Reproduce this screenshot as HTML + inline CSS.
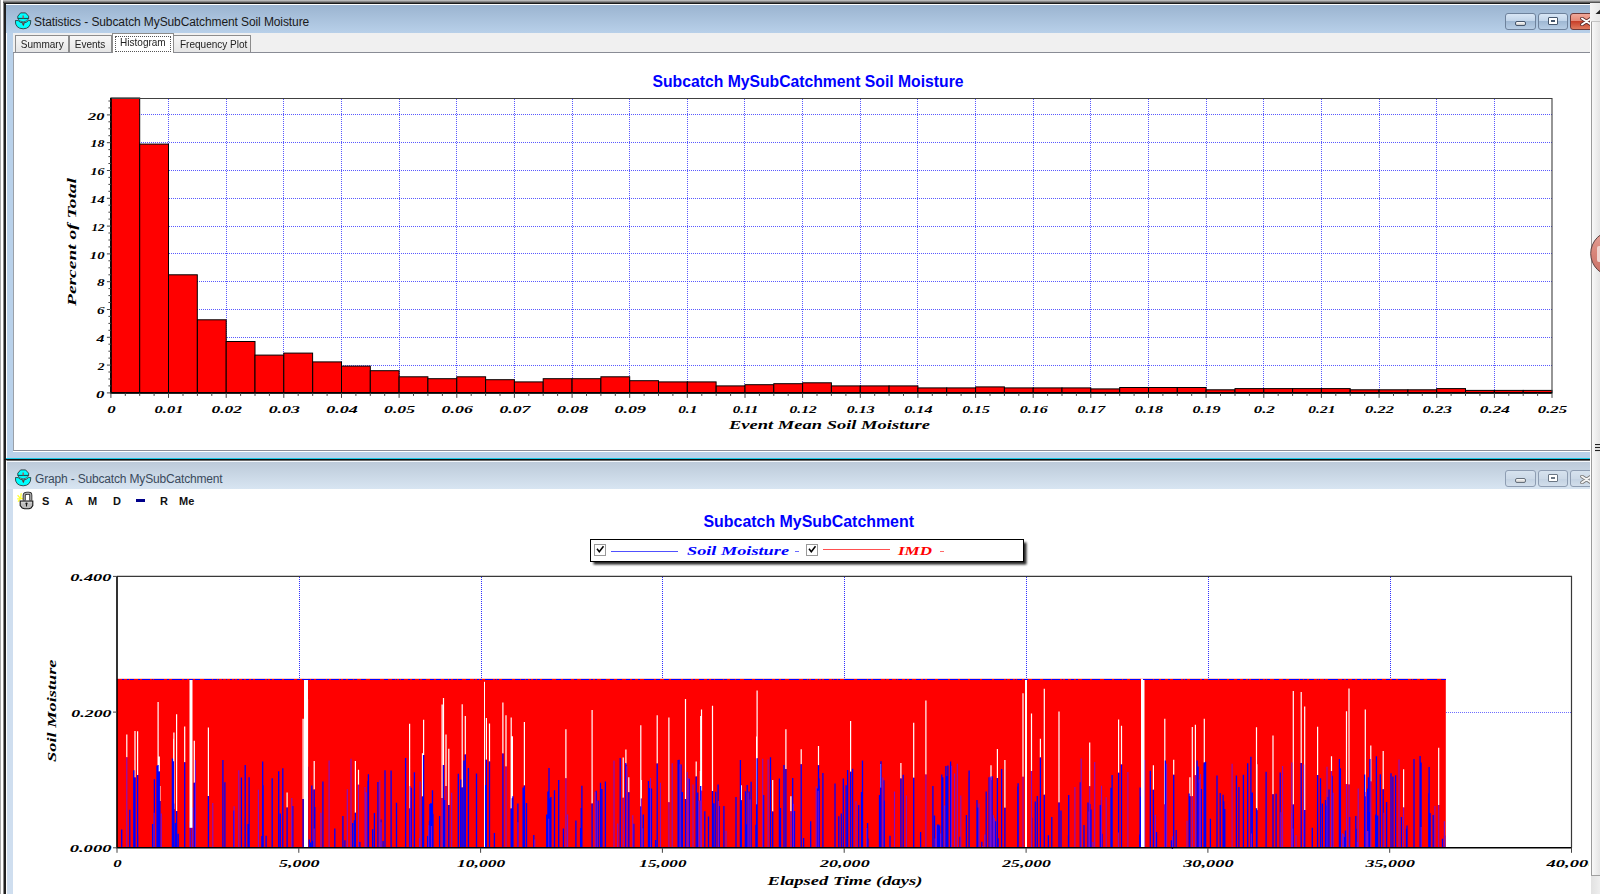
<!DOCTYPE html>
<html><head><meta charset="utf-8">
<style>
*{margin:0;padding:0;box-sizing:border-box}
html,body{width:1600px;height:894px;overflow:hidden;background:#fff;position:relative;font-family:"Liberation Sans",sans-serif}
.a{position:absolute}
.tb1{left:6px;top:5px;width:1584px;height:28px;background:linear-gradient(#9bb4d0,#b8d0e9)}
.tb2{left:7px;top:462px;width:1583px;height:27px;background:linear-gradient(#bccad9,#d8e5f2)}
.btn{height:17px;border:1px solid #6e829c;border-radius:3px;background:linear-gradient(#d8e6f5 0%,#c2d5ea 45%,#9fb8d3 50%,#b7cde5 100%)}
.btn2{height:17px;border:1px solid #8e9db2;border-radius:3px;background:linear-gradient(#d6e2ee 0%,#ccd9e7 50%,#c3d2e2 52%,#d2deeb 100%)}
.cls{height:17px;border:1px solid #6d3a3a;border-radius:3px;background:linear-gradient(#f0a89a 0%,#e58a78 45%,#c7402a 50%,#e07a5e 100%)}
.ttl{font-size:12px;color:#1a1a1a;white-space:nowrap}
.tab{top:35px;height:18px;border:1px solid #8c8c8c;border-bottom:none;background:linear-gradient(#f7f7f7,#e4e4e4);font-size:11.8px;color:#222;text-align:center;line-height:16px;white-space:nowrap}
.tab span{display:inline-block;transform:scaleX(0.85);transform-origin:50% 50%}
.tbar{font-family:"Liberation Sans",sans-serif;font-weight:bold;font-size:11px;color:#111;top:495px}
</style></head><body>
<!-- outer desktop edges -->
<div class="a" style="left:0;top:0;width:1600px;height:3px;background:linear-gradient(#d0d0d0,#9a9a9a 40%,#3a3a3a)"></div>
<div class="a" style="left:0;top:0;width:1px;height:894px;background:#a8a8a8"></div>
<div class="a" style="left:1px;top:0;width:2px;height:894px;background:#fff"></div>
<div class="a" style="left:3px;top:3px;width:1px;height:891px;background:#8a8a8a"></div>
<div class="a" style="left:4px;top:3px;width:2px;height:891px;background:#202020"></div>

<!-- TOP WINDOW -->
<div class="a" style="left:4px;top:3px;width:1586px;height:1px;background:#1a1a1a"></div>
<div class="a" style="left:6px;top:4px;width:1584px;height:455px;background:#b9d1ea;border-left:1px solid #fff;border-top:1px solid #fff"></div>
<div class="a tb1"></div>
<!-- icon -->
<svg class="a" style="left:15px;top:12px" width="18" height="18" viewBox="0 0 18 18">
 <path d="M0.3 8.6 L3.2 8.6 Q4.8 10.8 8.2 10.9 Q11.8 10.8 13.4 8.6 L15.8 8.6 Q15.9 16.6 8.2 16.8 Q0.2 16.6 0.3 8.6 Z" fill="#00ffff" stroke="#1a2a2a" stroke-width="0.8"/>
 <path d="M2.8 6.6 H13.6 Q12.6 9.7 8.2 9.8 Q3.8 9.7 2.8 6.6 Z" fill="#00ffff" stroke="#1a2a2a" stroke-width="0.6"/>
 <path d="M5.6 0.9 L10.6 0.9 L13.6 4.2 L13.6 6.4 L2.8 6.4 L2.8 4.2 Z" fill="#00ffff" stroke="#1a2a2a" stroke-width="0.8"/>
 <path d="M7.4 3.6 h1.6 v2.6 h-1.6z" fill="#9a6a6a"/>
 <path d="M6.8 11.2 L9.8 11.2 L8.3 14.2 Z" fill="#6a3030"/>
</svg>
<div class="a ttl" style="left:34px;top:14.5px;letter-spacing:-0.1px">Statistics - Subcatch MySubCatchment Soil Moisture</div>
<div class="a btn" style="left:1505px;top:13px;width:31px"><div class="a" style="left:9px;top:7px;width:11px;height:5px;border:1px solid #45566c;background:linear-gradient(#fff,#c8c8c8);border-radius:2px"></div></div>
<div class="a btn" style="left:1538px;top:13px;width:30px"><div class="a" style="left:9px;top:3px;width:10px;height:8px;border:1.5px solid #45566c;background:#fff;border-radius:1px"><div class="a" style="left:2px;top:2px;width:4px;height:2px;background:#45566c"></div></div></div>
<div class="a cls" style="left:1570px;top:13px;width:30px"><svg class="a" style="left:9px;top:3px" width="14" height="9"><path d="M2 1.5 L11 7.5 M11 1.5 L2 7.5" stroke="#5a2a2a" stroke-width="3.6" stroke-linecap="round"/><path d="M2 1.5 L11 7.5 M11 1.5 L2 7.5" stroke="#fff" stroke-width="2" stroke-linecap="round"/></svg></div>
<!-- tab area -->
<div class="a" style="left:13px;top:33px;width:1577px;height:20px;background:#f0f0f0"></div>
<div class="a tab" style="left:15px;width:54px"><span>Summary</span></div>
<div class="a tab" style="left:69px;width:43px"><span>Events</span></div>
<div class="a tab" style="left:173px;width:78px"><span>Frequency Plot</span></div>
<div class="a" style="left:13px;top:52px;width:1577px;height:1px;background:#898c95"></div>
<div class="a tab" style="left:112px;top:33px;width:62px;height:21px;background:#fff;line-height:16px;border-color:#8c8c8c"><div class="a" style="left:2px;top:2px;width:56px;height:16px;border:1px dotted #555"></div><span>Histogram</span></div>
<!-- client -->
<div class="a" style="left:13px;top:53px;width:1577px;height:398px;background:#fff;border-left:1px solid #9aa0a8;border-bottom:1px solid #8a8e98"></div>
<div class="a" style="left:13px;top:451px;width:1577px;height:1px;background:#fff"></div>
<div class="a" style="left:6px;top:458px;width:1584px;height:1px;background:#19c8e6"></div>
<div class="a" style="left:4px;top:459px;width:1586px;height:1px;background:#101010"></div>

<svg style="position:absolute;left:0;top:0" width="1600" height="460"><path d="M168.5 99V392.9M226.5 99V392.9M283.5 99V392.9M341.5 99V392.9M399.5 99V392.9M456.5 99V392.9M514.5 99V392.9M572.5 99V392.9M629.5 99V392.9M687.5 99V392.9M744.5 99V392.9M802.5 99V392.9M860.5 99V392.9M917.5 99V392.9M975.5 99V392.9M1033.5 99V392.9M1090.5 99V392.9M1148.5 99V392.9M1206.5 99V392.9M1263.5 99V392.9M1321.5 99V392.9M1379.5 99V392.9M1436.5 99V392.9M1494.5 99V392.9" stroke="#3030ff" stroke-width="1" stroke-dasharray="1 1" fill="none" opacity="0.8"/><path d="M111 365.5H1552.0M111 337.5H1552.0M111 309.5H1552.0M111 281.5H1552.0M111 253.5H1552.0M111 226.5H1552.0M111 198.5H1552.0M111 170.5H1552.0M111 142.5H1552.0M111 114.5H1552.0" stroke="#3030ff" stroke-width="1" stroke-dasharray="1 1" fill="none" opacity="0.8"/><g fill="#ff0000" stroke="#000" stroke-width="1"><rect x="110.9" y="98.0" width="28.8" height="294.9"/><rect x="139.7" y="144.1" width="28.8" height="248.8"/><rect x="168.5" y="274.8" width="28.8" height="118.1"/><rect x="197.4" y="319.8" width="28.8" height="73.1"/><rect x="226.2" y="341.5" width="28.8" height="51.4"/><rect x="255.0" y="355.1" width="28.8" height="37.8"/><rect x="283.8" y="353.1" width="28.8" height="39.8"/><rect x="312.7" y="361.9" width="28.8" height="31.0"/><rect x="341.5" y="366.1" width="28.8" height="26.8"/><rect x="370.3" y="370.7" width="28.8" height="22.2"/><rect x="399.1" y="376.8" width="28.8" height="16.1"/><rect x="427.9" y="378.7" width="28.8" height="14.2"/><rect x="456.8" y="376.8" width="28.8" height="16.1"/><rect x="485.6" y="379.7" width="28.8" height="13.2"/><rect x="514.4" y="381.9" width="28.8" height="11.0"/><rect x="543.2" y="378.7" width="28.8" height="14.2"/><rect x="572.1" y="378.7" width="28.8" height="14.2"/><rect x="600.9" y="376.8" width="28.8" height="16.1"/><rect x="629.7" y="380.7" width="28.8" height="12.2"/><rect x="658.5" y="381.9" width="28.8" height="11.0"/><rect x="687.3" y="381.9" width="28.8" height="11.0"/><rect x="716.2" y="385.9" width="28.8" height="6.9"/><rect x="745.0" y="384.7" width="28.8" height="8.2"/><rect x="773.8" y="383.7" width="28.8" height="9.2"/><rect x="802.6" y="382.8" width="28.8" height="10.1"/><rect x="831.4" y="385.9" width="28.8" height="6.9"/><rect x="860.3" y="385.9" width="28.8" height="6.9"/><rect x="889.1" y="385.9" width="28.8" height="6.9"/><rect x="917.9" y="387.9" width="28.8" height="5.0"/><rect x="946.7" y="387.9" width="28.8" height="5.0"/><rect x="975.6" y="386.9" width="28.8" height="6.0"/><rect x="1004.4" y="387.9" width="28.8" height="5.0"/><rect x="1033.2" y="387.9" width="28.8" height="5.0"/><rect x="1062.0" y="387.9" width="28.8" height="5.0"/><rect x="1090.8" y="388.9" width="28.8" height="4.0"/><rect x="1119.7" y="387.5" width="28.8" height="5.4"/><rect x="1148.5" y="387.5" width="28.8" height="5.4"/><rect x="1177.3" y="387.5" width="28.8" height="5.4"/><rect x="1206.1" y="389.8" width="28.8" height="3.1"/><rect x="1235.0" y="388.6" width="28.8" height="4.3"/><rect x="1263.8" y="388.6" width="28.8" height="4.3"/><rect x="1292.6" y="388.6" width="28.8" height="4.3"/><rect x="1321.4" y="388.6" width="28.8" height="4.3"/><rect x="1350.2" y="389.8" width="28.8" height="3.1"/><rect x="1379.1" y="389.8" width="28.8" height="3.1"/><rect x="1407.9" y="389.8" width="28.8" height="3.1"/><rect x="1436.7" y="388.6" width="28.8" height="4.3"/><rect x="1465.5" y="390.4" width="28.8" height="2.5"/><rect x="1494.4" y="390.4" width="28.8" height="2.5"/><rect x="1523.2" y="390.4" width="28.8" height="2.5"/></g><path d="M110.9 98.5H1552.0V392.9" stroke="#404040" stroke-width="1.1" fill="none"/><path d="M110.9 98.0V392.9H1552.0" stroke="#000" stroke-width="1.6" fill="none"/><path d="M110.9 392.9v5M125.3 392.9v3M139.7 392.9v3M154.1 392.9v3M168.5 392.9v5M183.0 392.9v3M197.4 392.9v3M211.8 392.9v3M226.2 392.9v5M240.6 392.9v3M255.0 392.9v3M269.4 392.9v3M283.8 392.9v5M298.2 392.9v3M312.7 392.9v3M327.1 392.9v3M341.5 392.9v5M355.9 392.9v3M370.3 392.9v3M384.7 392.9v3M399.1 392.9v5M413.5 392.9v3M427.9 392.9v3M442.4 392.9v3M456.8 392.9v5M471.2 392.9v3M485.6 392.9v3M500.0 392.9v3M514.4 392.9v5M528.8 392.9v3M543.2 392.9v3M557.6 392.9v3M572.1 392.9v5M586.5 392.9v3M600.9 392.9v3M615.3 392.9v3M629.7 392.9v5M644.1 392.9v3M658.5 392.9v3M672.9 392.9v3M687.3 392.9v5M701.8 392.9v3M716.2 392.9v3M730.6 392.9v3M745.0 392.9v5M759.4 392.9v3M773.8 392.9v3M788.2 392.9v3M802.6 392.9v5M817.0 392.9v3M831.4 392.9v3M845.9 392.9v3M860.3 392.9v5M874.7 392.9v3M889.1 392.9v3M903.5 392.9v3M917.9 392.9v5M932.3 392.9v3M946.7 392.9v3M961.1 392.9v3M975.6 392.9v5M990.0 392.9v3M1004.4 392.9v3M1018.8 392.9v3M1033.2 392.9v5M1047.6 392.9v3M1062.0 392.9v3M1076.4 392.9v3M1090.8 392.9v5M1105.3 392.9v3M1119.7 392.9v3M1134.1 392.9v3M1148.5 392.9v5M1162.9 392.9v3M1177.3 392.9v3M1191.7 392.9v3M1206.1 392.9v5M1220.5 392.9v3M1235.0 392.9v3M1249.4 392.9v3M1263.8 392.9v5M1278.2 392.9v3M1292.6 392.9v3M1307.0 392.9v3M1321.4 392.9v5M1335.8 392.9v3M1350.2 392.9v3M1364.7 392.9v3M1379.1 392.9v5M1393.5 392.9v3M1407.9 392.9v3M1422.3 392.9v3M1436.7 392.9v5M1451.1 392.9v3M1465.5 392.9v3M1479.9 392.9v3M1494.4 392.9v5M1508.8 392.9v3M1523.2 392.9v3M1537.6 392.9v3M1552.0 392.9v5M110.9 392.9h-4M110.9 385.9h-2.5M110.9 379.0h-2.5M110.9 372.0h-2.5M110.9 365.1h-4M110.9 358.1h-2.5M110.9 351.2h-2.5M110.9 344.2h-2.5M110.9 337.3h-4M110.9 330.3h-2.5M110.9 323.4h-2.5M110.9 316.4h-2.5M110.9 309.5h-4M110.9 302.5h-2.5M110.9 295.6h-2.5M110.9 288.6h-2.5M110.9 281.7h-4M110.9 274.8h-2.5M110.9 267.8h-2.5M110.9 260.8h-2.5M110.9 253.9h-4M110.9 246.9h-2.5M110.9 240.0h-2.5M110.9 233.0h-2.5M110.9 226.1h-4M110.9 219.1h-2.5M110.9 212.2h-2.5M110.9 205.2h-2.5M110.9 198.3h-4M110.9 191.3h-2.5M110.9 184.4h-2.5M110.9 177.4h-2.5M110.9 170.5h-4M110.9 163.5h-2.5M110.9 156.6h-2.5M110.9 149.6h-2.5M110.9 142.7h-4M110.9 135.7h-2.5M110.9 128.8h-2.5M110.9 121.8h-2.5M110.9 114.9h-4M110.9 107.9h-2.5M110.9 101.0h-2.5" stroke="#444" stroke-width="1" fill="none"/><g font-family="Liberation Serif" font-weight="bold" font-style="italic" font-size="11" fill="#000"><text x="111.4" y="412.6" text-anchor="middle" textLength="8.4" lengthAdjust="spacingAndGlyphs">0</text><text x="169.0" y="412.6" text-anchor="middle" textLength="28.9" lengthAdjust="spacingAndGlyphs">0.01</text><text x="226.7" y="412.6" text-anchor="middle" textLength="30.6" lengthAdjust="spacingAndGlyphs">0.02</text><text x="284.3" y="412.6" text-anchor="middle" textLength="31.2" lengthAdjust="spacingAndGlyphs">0.03</text><text x="342.0" y="412.6" text-anchor="middle" textLength="31.7" lengthAdjust="spacingAndGlyphs">0.04</text><text x="399.6" y="412.6" text-anchor="middle" textLength="31.2" lengthAdjust="spacingAndGlyphs">0.05</text><text x="457.3" y="412.6" text-anchor="middle" textLength="31.4" lengthAdjust="spacingAndGlyphs">0.06</text><text x="514.9" y="412.6" text-anchor="middle" textLength="31.0" lengthAdjust="spacingAndGlyphs">0.07</text><text x="572.6" y="412.6" text-anchor="middle" textLength="31.4" lengthAdjust="spacingAndGlyphs">0.08</text><text x="630.2" y="412.6" text-anchor="middle" textLength="31.4" lengthAdjust="spacingAndGlyphs">0.09</text><text x="687.8" y="412.6" text-anchor="middle" textLength="19.3" lengthAdjust="spacingAndGlyphs">0.1</text><text x="745.5" y="412.6" text-anchor="middle" textLength="25.6" lengthAdjust="spacingAndGlyphs">0.11</text><text x="803.1" y="412.6" text-anchor="middle" textLength="27.3" lengthAdjust="spacingAndGlyphs">0.12</text><text x="860.8" y="412.6" text-anchor="middle" textLength="27.9" lengthAdjust="spacingAndGlyphs">0.13</text><text x="918.4" y="412.6" text-anchor="middle" textLength="28.4" lengthAdjust="spacingAndGlyphs">0.14</text><text x="976.1" y="412.6" text-anchor="middle" textLength="27.9" lengthAdjust="spacingAndGlyphs">0.15</text><text x="1033.7" y="412.6" text-anchor="middle" textLength="28.1" lengthAdjust="spacingAndGlyphs">0.16</text><text x="1091.3" y="412.6" text-anchor="middle" textLength="27.7" lengthAdjust="spacingAndGlyphs">0.17</text><text x="1149.0" y="412.6" text-anchor="middle" textLength="28.1" lengthAdjust="spacingAndGlyphs">0.18</text><text x="1206.6" y="412.6" text-anchor="middle" textLength="28.1" lengthAdjust="spacingAndGlyphs">0.19</text><text x="1264.3" y="412.6" text-anchor="middle" textLength="21.0" lengthAdjust="spacingAndGlyphs">0.2</text><text x="1321.9" y="412.6" text-anchor="middle" textLength="27.3" lengthAdjust="spacingAndGlyphs">0.21</text><text x="1379.6" y="412.6" text-anchor="middle" textLength="29.0" lengthAdjust="spacingAndGlyphs">0.22</text><text x="1437.2" y="412.6" text-anchor="middle" textLength="29.6" lengthAdjust="spacingAndGlyphs">0.23</text><text x="1494.9" y="412.6" text-anchor="middle" textLength="30.1" lengthAdjust="spacingAndGlyphs">0.24</text><text x="1552.5" y="412.6" text-anchor="middle" textLength="29.6" lengthAdjust="spacingAndGlyphs">0.25</text><text x="104.5" y="397.6" text-anchor="end" textLength="8.4" lengthAdjust="spacingAndGlyphs">0</text><text x="104.5" y="369.8" text-anchor="end" textLength="6.8" lengthAdjust="spacingAndGlyphs">2</text><text x="104.5" y="342.0" text-anchor="end" textLength="7.9" lengthAdjust="spacingAndGlyphs">4</text><text x="104.5" y="314.2" text-anchor="end" textLength="7.6" lengthAdjust="spacingAndGlyphs">6</text><text x="104.5" y="286.4" text-anchor="end" textLength="7.6" lengthAdjust="spacingAndGlyphs">8</text><text x="104.5" y="258.6" text-anchor="end" textLength="14.7" lengthAdjust="spacingAndGlyphs">10</text><text x="104.5" y="230.8" text-anchor="end" textLength="13.1" lengthAdjust="spacingAndGlyphs">12</text><text x="104.5" y="203.0" text-anchor="end" textLength="14.2" lengthAdjust="spacingAndGlyphs">14</text><text x="104.5" y="175.2" text-anchor="end" textLength="13.9" lengthAdjust="spacingAndGlyphs">16</text><text x="104.5" y="147.4" text-anchor="end" textLength="13.9" lengthAdjust="spacingAndGlyphs">18</text><text x="104.5" y="119.6" text-anchor="end" textLength="16.4" lengthAdjust="spacingAndGlyphs">20</text></g><text x="729" y="428.7" textLength="201" lengthAdjust="spacingAndGlyphs" font-family="Liberation Serif" font-weight="bold" font-style="italic" font-size="13.5">Event Mean Soil Moisture</text><text transform="translate(75.8,306) rotate(-90)" textLength="128" lengthAdjust="spacingAndGlyphs" font-family="Liberation Serif" font-weight="bold" font-style="italic" font-size="13.5">Percent of Total</text><text x="652.5" y="86.7" textLength="311" lengthAdjust="spacingAndGlyphs" font-family="Liberation Sans" font-weight="bold" font-size="16" fill="#0000ff">Subcatch MySubCatchment Soil Moisture</text></svg>

<!-- BOTTOM WINDOW -->
<div class="a" style="left:6px;top:460px;width:1584px;height:434px;background:#cfdeef;border-left:1px solid #fff;border-top:1px solid #6a6a6a"></div>
<div class="a" style="left:7px;top:461px;width:1583px;height:1px;background:#f4f8fc"></div>
<div class="a tb2"></div>
<svg class="a" style="left:15px;top:469px" width="18" height="18" viewBox="0 0 18 18">
 <path d="M0.3 8.6 L3.2 8.6 Q4.8 10.8 8.2 10.9 Q11.8 10.8 13.4 8.6 L15.8 8.6 Q15.9 16.6 8.2 16.8 Q0.2 16.6 0.3 8.6 Z" fill="#00ffff" stroke="#1a2a2a" stroke-width="0.8"/>
 <path d="M2.8 6.6 H13.6 Q12.6 9.7 8.2 9.8 Q3.8 9.7 2.8 6.6 Z" fill="#00ffff" stroke="#1a2a2a" stroke-width="0.6"/>
 <path d="M5.6 0.9 L10.6 0.9 L13.6 4.2 L13.6 6.4 L2.8 6.4 L2.8 4.2 Z" fill="#00ffff" stroke="#1a2a2a" stroke-width="0.8"/>
 <path d="M7.4 3.6 h1.6 v2.6 h-1.6z" fill="#9a6a6a"/>
 <path d="M6.8 11.2 L9.8 11.2 L8.3 14.2 Z" fill="#6a3030"/>
</svg>
<div class="a ttl" style="left:35px;top:471.5px;letter-spacing:-0.17px;color:#3a4a5c">Graph - Subcatch MySubCatchment</div>
<div class="a btn2" style="left:1505px;top:470px;width:31px"><div class="a" style="left:9px;top:7px;width:11px;height:5px;border:1px solid #66707c;background:linear-gradient(#fff,#c8c8c8);border-radius:2px"></div></div>
<div class="a btn2" style="left:1538px;top:470px;width:30px"><div class="a" style="left:9px;top:3px;width:10px;height:8px;border:1.5px solid #6a7684;background:#fff;border-radius:1px"><div class="a" style="left:2px;top:2px;width:4px;height:2px;background:#6a7684"></div></div></div>
<div class="a btn2" style="left:1570px;top:470px;width:30px"><svg class="a" style="left:9px;top:3.5px" width="14" height="9"><path d="M2 1.5 L11 7.5 M11 1.5 L2 7.5" stroke="#777" stroke-width="3.6" stroke-linecap="round"/><path d="M2 1.5 L11 7.5 M11 1.5 L2 7.5" stroke="#f4f4f4" stroke-width="2" stroke-linecap="round"/></svg></div>
<div class="a" style="left:13px;top:489px;width:1577px;height:405px;background:#fff"></div>
<!-- toolbar -->
<svg class="a" style="left:14px;top:490px" width="24" height="22" viewBox="0 0 24 22">
 <path d="M6.6 8.6 L3.6 5.2 M6.6 8.6 L7.2 3.2 M6.6 8.6 L3.2 8.8 M6.6 8.6 L4 11.6 M6.6 8.6 L11 8.4" stroke="#ffff30" stroke-width="1.3"/>
 <path d="M10.2 10.5 V5.2 Q10.2 3.3 13 3.3 H14.8 Q16.8 3.3 16.8 5.2 V10.5" stroke="#222" stroke-width="3" fill="none"/>
 <path d="M10.2 10.5 V5.2 Q10.2 3.3 13 3.3 H14.8 Q16.8 3.3 16.8 5.2 V10.5" stroke="#a8a8a8" stroke-width="1.4" fill="none"/>
 <path d="M6.2 11 H18.8 V15.5 L17 18 L15 18.8 H10.5 L8.2 18 L6.2 15.5 Z" fill="#bdbdbd" stroke="#141414" stroke-width="1.1"/>
 <path d="M7 12.8 H18" stroke="#e0e0e0" stroke-width="0.8"/>
 <circle cx="12.5" cy="13.6" r="1.1" fill="#111"/><path d="M12.5 13.6 V16.5" stroke="#111" stroke-width="1.1"/>
</svg>
<div class="a tbar" style="left:42px">S</div>
<div class="a tbar" style="left:65px">A</div>
<div class="a tbar" style="left:88px">M</div>
<div class="a tbar" style="left:113px">D</div>
<div class="a" style="left:136px;top:499px;width:9px;height:3px;background:#00008a"></div>
<div class="a tbar" style="left:160px">R</div>
<div class="a tbar" style="left:179px">Me</div>

<svg style="position:absolute;left:0;top:0" width="1589" height="894"><path d="M299.5 577V847.8M481.5 577V847.8M662.5 577V847.8M844.5 577V847.8M1026.5 577V847.8M1208.5 577V847.8M1390.5 577V847.8" stroke="#1a1aff" stroke-width="1" stroke-dasharray="1 1" fill="none" opacity="0.9"/><path d="M118 712.5H1571.5" stroke="#3030ff" stroke-width="1" stroke-dasharray="1 1" fill="none" opacity="0.7"/><rect x="117.0" y="678.8" width="1328.8" height="169.0" fill="#ff0000"/><path d="M126.8 734.6V757.3M135.0 730.9V777.6M137.6 731.2V775.0M158.1 702.0V794.6M159.3 756.6V771.6M159.9 785.9V800.9M173.7 738.8V803.4M173.9 732.4V809.2M176.6 714.2V811.0M184.7 726.4V762.3M194.3 740.8V782.8M208.4 727.5V796.1M287.1 792.4V807.4M303.1 718.7V799.0M307.5 699.2V766.8M314.2 760.9V789.6M355.4 761.0V812.8M358.5 769.8V784.8M409.6 723.7V808.4M422.5 753.3V796.6M423.6 719.8V755.0M442.1 704.4V798.0M443.5 697.9V765.0M446.0 734.6V786.0M448.8 748.7V804.9M462.2 704.3V787.6M465.3 716.0V754.5M486.4 718.1V759.7M489.5 723.5V761.5M502.9 702.6V753.4M506.0 715.2V766.4M511.2 717.6V808.4M512.4 736.3V798.2M524.4 722.1V785.6M565.9 729.3V778.3M592.1 709.9V803.6M623.2 757.5V797.8M625.9 749.4V764.4M628.8 777.2V792.2M640.8 725.2V806.6M641.3 780.1V798.5M657.2 715.2V763.4M668.9 717.4V802.3M685.5 699.1V799.1M696.2 761.6V776.6M700.4 771.0V800.6M700.7 715.9V786.1M701.5 709.4V790.7M712.5 705.7V791.1M741.3 785.3V800.3M756.6 736.4V804.4M757.1 690.6V758.2M772.7 780.1V811.5M785.9 729.2V769.0M790.9 796.3V811.3M801.2 749.2V764.2M818.5 746.1V765.2M850.6 720.9V771.7M880.6 764.1V787.8M900.9 763.1V778.4M913.7 722.8V777.8M925.9 700.4V774.4M991.0 765.3V780.3M997.4 749.0V777.9M1004.9 759.9V807.8M1023.0 693.2V776.7M1031.5 713.4V770.9M1040.4 738.7V757.6M1044.3 688.8V794.7M1059.0 711.4V802.6M1089.7 742.4V786.3M1118.6 719.4V772.8M1121.5 725.8V764.4M1153.4 765.3V789.7M1164.8 718.8V804.6M1173.7 759.8V774.8M1189.9 777.2V796.2M1192.3 727.1V796.3M1195.4 724.7V775.3M1204.3 718.7V762.5M1256.5 727.2V808.3M1256.9 764.3V810.3M1273.0 735.4V794.3M1293.3 690.9V804.6M1301.2 692.1V763.0M1304.7 706.5V810.0M1317.6 726.8V775.0M1331.5 756.3V771.3M1346.5 711.2V784.3M1349.0 688.6V784.5M1365.3 709.6V796.5M1370.8 745.6V781.6M1383.2 751.0V789.2M1403.6 769.2V807.6M1438.7 747.8V805.0" stroke="#fff" stroke-width="1.2" fill="none"/><path d="M135.0 847.8V777.6M137.6 847.8V775.0M158.1 847.8V794.6M159.3 847.8V771.6M159.9 847.8V800.9M173.7 847.8V803.4M173.9 847.8V809.2M176.6 847.8V811.0M184.7 847.8V762.3M194.3 847.8V782.8M208.4 847.8V796.1M287.1 847.8V807.4M303.1 847.8V799.0M307.5 847.8V766.8M314.2 847.8V789.6M355.4 847.8V812.8M409.6 847.8V808.4M422.5 847.8V796.6M423.6 847.8V755.0M443.5 847.8V765.0M448.8 847.8V804.9M462.2 847.8V787.6M465.3 847.8V754.5M486.4 847.8V759.7M489.5 847.8V761.5M502.9 847.8V753.4M511.2 847.8V808.4M512.4 847.8V798.2M524.4 847.8V785.6M592.1 847.8V803.6M625.9 847.8V764.4M628.8 847.8V792.2M640.8 847.8V806.6M657.2 847.8V763.4M685.5 847.8V799.1M696.2 847.8V776.6M700.7 847.8V786.1M712.5 847.8V791.1M741.3 847.8V800.3M756.6 847.8V804.4M757.1 847.8V758.2M772.7 847.8V811.5M785.9 847.8V769.0M801.2 847.8V764.2M818.5 847.8V765.2M850.6 847.8V771.7M880.6 847.8V787.8M900.9 847.8V778.4M913.7 847.8V777.8M991.0 847.8V780.3M997.4 847.8V777.9M1004.9 847.8V807.8M1040.4 847.8V757.6M1044.3 847.8V794.7M1059.0 847.8V802.6M1118.6 847.8V772.8M1121.5 847.8V764.4M1153.4 847.8V789.7M1173.7 847.8V774.8M1189.9 847.8V796.2M1204.3 847.8V762.5M1256.5 847.8V808.3M1256.9 847.8V810.3M1273.0 847.8V794.3M1293.3 847.8V804.6M1301.2 847.8V763.0M1304.7 847.8V810.0M1317.6 847.8V775.0M1365.3 847.8V796.5M1383.2 847.8V789.2M121.7 847.8V829.6M129.8 847.8V809.8M133.8 847.8V770.3M137.7 847.8V835.3M152.6 847.8V824.0M154.4 847.8V779.2M157.0 847.8V765.7M158.0 847.8V765.0M158.5 847.8V837.9M172.4 847.8V758.4M173.4 847.8V761.2M175.5 847.8V823.1M178.2 847.8V833.8M190.6 847.8V793.6M222.9 847.8V759.9M224.9 847.8V782.2M233.7 847.8V810.6M241.4 847.8V777.5M245.1 847.8V818.3M245.2 847.8V764.9M248.1 847.8V824.1M249.1 847.8V777.3M261.9 847.8V836.0M262.7 847.8V761.6M263.1 847.8V785.2M266.1 847.8V835.8M272.2 847.8V778.2M278.7 847.8V771.2M280.3 847.8V813.6M282.8 847.8V768.2M292.8 847.8V805.9M309.4 847.8V839.5M310.4 847.8V842.5M311.4 847.8V846.4M312.4 847.8V840.7M311.8 847.8V785.4M311.8 847.8V813.3M314.8 847.8V807.0M322.9 847.8V781.6M334.8 847.8V828.6M342.9 847.8V815.9M344.9 847.8V840.3M352.6 847.8V822.9M354.4 847.8V820.3M359.9 847.8V842.0M368.0 847.8V780.7M368.4 847.8V774.3M372.6 847.8V829.3M374.4 847.8V812.9M377.9 847.8V782.1M381.0 847.8V819.6M383.1 847.8V841.0M385.0 847.8V770.2M391.1 847.8V770.4M396.5 847.8V802.7M405.6 847.8V757.9M411.2 847.8V787.7M410.9 847.8V800.5M414.4 847.8V772.3M422.8 847.8V833.2M427.7 847.8V836.1M429.5 847.8V820.8M430.5 847.8V823.3M429.9 847.8V804.0M430.9 847.8V803.1M431.9 847.8V804.1M432.9 847.8V813.8M432.5 847.8V790.2M433.0 847.8V814.7M439.6 847.8V815.9M444.8 847.8V800.0M458.3 847.8V773.8M460.7 847.8V779.5M463.9 847.8V826.6M463.9 847.8V760.4M468.4 847.8V768.1M476.5 847.8V773.6M485.5 847.8V784.9M494.4 847.8V833.0M512.9 847.8V796.3M517.9 847.8V803.4M523.1 847.8V787.5M526.5 847.8V803.1M533.8 847.8V835.1M546.7 847.8V814.6M547.7 847.8V815.6M549.7 847.8V816.0M547.9 847.8V791.5M548.9 847.8V790.4M549.9 847.8V798.2M550.9 847.8V796.9M549.0 847.8V768.0M554.5 847.8V790.2M558.7 847.8V779.9M563.4 847.8V828.4M575.9 847.8V820.4M580.6 847.8V828.0M581.2 847.8V808.1M581.9 847.8V785.7M596.2 847.8V790.8M598.2 847.8V800.6M600.5 847.8V782.8M601.9 847.8V789.1M605.4 847.8V781.4M620.2 847.8V758.1M625.8 847.8V762.9M633.8 847.8V823.8M640.7 847.8V827.0M643.3 847.8V814.4M648.5 847.8V781.0M649.5 847.8V788.0M651.5 847.8V788.6M655.6 847.8V839.9M678.1 847.8V760.1M679.1 847.8V759.8M681.0 847.8V764.5M682.4 847.8V791.9M689.2 847.8V778.8M697.7 847.8V792.5M704.8 847.8V811.2M708.5 847.8V816.6M713.9 847.8V803.3M715.7 847.8V791.7M718.1 847.8V784.6M719.2 847.8V805.9M723.9 847.8V806.1M736.0 847.8V797.1M740.4 847.8V759.9M745.4 847.8V791.3M746.4 847.8V824.3M747.2 847.8V784.9M749.1 847.8V791.6M751.1 847.8V801.3M751.1 847.8V781.8M755.9 847.8V824.7M763.6 847.8V795.1M770.5 847.8V757.2M779.4 847.8V778.6M780.5 847.8V808.1M784.0 847.8V764.9M792.7 847.8V778.0M794.5 847.8V811.0M803.6 847.8V838.0M810.7 847.8V821.3M817.2 847.8V788.4M819.2 847.8V785.6M819.0 847.8V778.3M822.9 847.8V772.9M835.0 847.8V783.4M838.8 847.8V816.3M841.3 847.8V813.5M843.3 847.8V778.4M846.1 847.8V785.3M847.6 847.8V770.1M852.6 847.8V768.7M858.7 847.8V805.1M861.5 847.8V791.9M862.5 847.8V760.4M867.6 847.8V823.0M868.0 847.8V838.5M879.5 847.8V795.1M881.0 847.8V761.3M883.9 847.8V780.3M884.3 847.8V800.4M890.0 847.8V835.7M903.2 847.8V774.8M920.6 847.8V832.1M932.9 847.8V785.9M934.5 847.8V815.5M937.6 847.8V824.4M938.6 847.8V824.4M939.6 847.8V825.4M941.8 847.8V774.5M942.8 847.8V777.2M945.9 847.8V766.0M946.9 847.8V775.9M947.9 847.8V765.5M946.7 847.8V841.8M947.3 847.8V821.0M950.6 847.8V761.4M960.1 847.8V836.7M966.4 847.8V815.1M969.0 847.8V777.6M969.1 847.8V770.6M977.0 847.8V799.9M978.0 847.8V807.4M981.8 847.8V841.7M986.2 847.8V791.5M989.1 847.8V777.2M992.1 847.8V776.3M995.5 847.8V821.3M998.1 847.8V838.3M1001.6 847.8V769.1M1017.8 847.8V786.5M1018.1 847.8V783.3M1031.7 847.8V817.7M1035.3 847.8V801.6M1037.3 847.8V796.0M1048.4 847.8V835.2M1051.8 847.8V817.0M1061.0 847.8V810.5M1068.5 847.8V835.3M1068.7 847.8V795.0M1080.3 847.8V782.3M1084.0 847.8V824.9M1088.0 847.8V802.4M1090.0 847.8V804.1M1091.0 847.8V809.4M1100.3 847.8V804.9M1101.4 847.8V800.0M1102.0 847.8V833.7M1111.0 847.8V787.7M1111.9 847.8V789.9M1112.1 847.8V775.0M1139.7 847.8V834.6M1140.1 847.8V787.4M1141.1 847.8V796.5M1142.1 847.8V788.1M1150.3 847.8V770.8M1156.5 847.8V832.0M1165.4 847.8V760.5M1171.4 847.8V840.3M1172.4 847.8V848.9M1173.4 847.8V844.6M1176.2 847.8V830.1M1189.1 847.8V793.4M1197.1 847.8V760.5M1198.1 847.8V766.4M1198.3 847.8V783.2M1199.3 847.8V782.7M1201.3 847.8V789.0M1204.1 847.8V764.6M1205.6 847.8V761.7M1210.4 847.8V818.8M1217.0 847.8V775.5M1220.2 847.8V792.9M1223.1 847.8V794.8M1223.8 847.8V801.2M1224.8 847.8V808.9M1236.4 847.8V775.5M1238.9 847.8V787.1M1243.4 847.8V774.8M1247.7 847.8V763.3M1250.9 847.8V756.7M1252.3 847.8V792.6M1266.1 847.8V771.7M1276.1 847.8V793.7M1280.2 847.8V772.5M1312.3 847.8V827.7M1320.5 847.8V778.2M1322.4 847.8V803.6M1325.5 847.8V799.9M1326.5 847.8V805.6M1327.5 847.8V797.0M1329.0 847.8V789.5M1332.1 847.8V775.7M1339.4 847.8V758.9M1340.4 847.8V768.2M1344.4 847.8V837.0M1345.4 847.8V830.5M1349.6 847.8V817.1M1355.8 847.8V815.9M1356.2 847.8V828.7M1364.6 847.8V774.6M1365.8 847.8V831.5M1367.6 847.8V788.4M1367.7 847.8V805.1M1368.7 847.8V813.0M1369.7 847.8V812.0M1368.4 847.8V777.2M1369.9 847.8V759.0M1375.7 847.8V814.4M1376.7 847.8V823.7M1377.7 847.8V815.5M1376.4 847.8V756.3M1380.3 847.8V774.3M1386.6 847.8V801.9M1391.0 847.8V773.2M1392.9 847.8V776.6M1395.6 847.8V775.2M1401.4 847.8V817.0M1406.5 847.8V828.7M1407.0 847.8V825.6M1414.0 847.8V759.0M1420.1 847.8V756.1M1421.1 847.8V762.4M1428.8 847.8V793.3M1429.1 847.8V766.9M1430.1 847.8V812.9M1433.2 847.8V814.9M1442.5 847.8V838.7M1444.6 847.8V835.6" stroke="#0000ff" stroke-width="1.3" fill="none"/><path d="M126.8 847.8V757.3M358.5 847.8V784.8M442.1 847.8V798.0M446.0 847.8V786.0M506.0 847.8V766.4M565.9 847.8V778.3M623.2 847.8V797.8M641.3 847.8V798.5M668.9 847.8V802.3M700.4 847.8V800.6M701.5 847.8V790.7M790.9 847.8V811.3M925.9 847.8V774.4M1023.0 847.8V776.7M1031.5 847.8V770.9M1089.7 847.8V786.3M1164.8 847.8V804.6M1192.3 847.8V796.3M1195.4 847.8V775.3M1331.5 847.8V771.3M1346.5 847.8V784.3M1349.0 847.8V784.5M1370.8 847.8V781.6M1403.6 847.8V807.6M1438.7 847.8V805.0M154.1 847.8V812.8M161.3 847.8V813.4M190.0 847.8V821.5M192.6 847.8V807.5M195.5 847.8V760.1M212.8 847.8V803.0M234.1 847.8V806.3M238.7 847.8V841.6M238.8 847.8V770.2M258.4 847.8V789.7M291.8 847.8V797.9M314.1 847.8V828.6M320.9 847.8V812.7M329.1 847.8V760.4M347.3 847.8V789.3M351.0 847.8V758.7M365.0 847.8V786.9M366.0 847.8V792.3M365.0 847.8V793.5M379.8 847.8V780.2M381.1 847.8V822.3M410.2 847.8V786.1M419.5 847.8V838.0M420.1 847.8V781.6M428.7 847.8V825.2M431.5 847.8V825.9M451.7 847.8V792.7M518.0 847.8V822.3M534.8 847.8V839.4M548.7 847.8V818.7M567.6 847.8V814.6M595.2 847.8V791.8M597.2 847.8V800.7M614.0 847.8V760.4M617.7 847.8V823.5M626.8 847.8V766.3M632.8 847.8V815.2M642.7 847.8V828.2M650.5 847.8V778.0M660.4 847.8V782.8M672.2 847.8V763.2M680.1 847.8V764.2M687.2 847.8V772.1M688.2 847.8V777.9M693.0 847.8V784.6M698.7 847.8V800.7M718.5 847.8V801.0M726.0 847.8V830.8M748.1 847.8V792.5M750.1 847.8V799.5M762.7 847.8V758.7M768.1 847.8V759.5M793.5 847.8V803.8M816.2 847.8V786.4M818.2 847.8V790.8M856.0 847.8V801.3M866.7 847.8V828.1M882.9 847.8V777.4M894.5 847.8V791.4M906.4 847.8V795.5M935.2 847.8V838.6M936.4 847.8V825.3M940.6 847.8V833.5M944.6 847.8V805.4M951.6 847.8V765.7M954.6 847.8V773.6M957.3 847.8V763.8M960.8 847.8V795.6M979.0 847.8V803.5M982.8 847.8V846.1M984.8 847.8V834.5M990.1 847.8V776.4M991.1 847.8V777.5M993.5 847.8V815.3M994.5 847.8V818.3M1074.9 847.8V787.0M1081.1 847.8V779.7M1081.2 847.8V758.5M1089.0 847.8V811.6M1092.9 847.8V842.1M1094.7 847.8V761.9M1101.5 847.8V785.7M1106.2 847.8V797.2M1118.4 847.8V832.4M1127.9 847.8V772.0M1144.7 847.8V759.7M1155.4 847.8V814.7M1166.6 847.8V763.8M1172.6 847.8V836.3M1187.0 847.8V820.8M1200.3 847.8V783.2M1199.3 847.8V779.5M1200.4 847.8V774.0M1232.1 847.8V763.7M1251.4 847.8V833.4M1280.9 847.8V812.3M1282.6 847.8V766.1M1291.5 847.8V812.9M1291.8 847.8V762.6M1292.7 847.8V828.5M1296.0 847.8V835.2M1303.6 847.8V764.4M1327.0 847.8V766.8M1333.2 847.8V792.7M1342.4 847.8V833.3M1343.4 847.8V834.3M1343.3 847.8V842.4M1357.3 847.8V842.0M1358.2 847.8V788.6M1366.8 847.8V831.3M1367.8 847.8V830.9M1366.0 847.8V792.0M1370.7 847.8V802.4M1383.9 847.8V812.8M1399.0 847.8V759.4M1421.2 847.8V826.9M1434.9 847.8V805.9M1444.4 847.8V821.2" stroke="#8010c8" stroke-width="1.1" fill="none"/><rect x="189.5" y="679.8" width="3" height="148.0" fill="#fff"/><rect x="304" y="678.8" width="4" height="169.0" fill="#fff"/><rect x="484" y="681.8" width="1" height="166.0" fill="#fff"/><rect x="1025" y="678.8" width="2" height="169.0" fill="#fff"/><rect x="1141" y="678.8" width="3.5" height="169.0" fill="#fff"/><path d="M117 679.5H118M122 679.5H124M127 679.5H129M130 679.5H134M138 679.5H140M142 679.5H150M152 679.5H153M154 679.5H164M167 679.5H169M172 679.5H182M184 679.5H187M189 679.5H193M195 679.5H200M204 679.5H212M213 679.5H217M218 679.5H219M222 679.5H223M226 679.5H227M230 679.5H232M234 679.5H235M237 679.5H239M242 679.5H244M246 679.5H249M251 679.5H253M255 679.5H265M267 679.5H268M270 679.5H272M274 679.5H282M284 679.5H294M297 679.5H300M302 679.5H310M311 679.5H314M316 679.5H326M327 679.5H329M331 679.5H339M340 679.5H341M343 679.5H346M348 679.5H353M354 679.5H357M361 679.5H366M370 679.5H380M384 679.5H388M392 679.5H395M396 679.5H397M399 679.5H400M401 679.5H404M408 679.5H410M412 679.5H415M419 679.5H420M422 679.5H426M430 679.5H434M436 679.5H441M444 679.5H448M449 679.5H451M453 679.5H457M458 679.5H462M466 679.5H470M474 679.5H475M477 679.5H479M480 679.5H482M485 679.5H493M495 679.5H496M497 679.5H499M502 679.5H512M515 679.5H520M521 679.5H525M526 679.5H528M530 679.5H531M533 679.5H536M537 679.5H540M542 679.5H552M556 679.5H561M563 679.5H571M574 679.5H577M581 679.5H589M591 679.5H593M595 679.5H597M601 679.5H606M610 679.5H614M617 679.5H622M626 679.5H630M632 679.5H635M638 679.5H640M644 679.5H654M656 679.5H660M664 679.5H669M671 679.5H681M683 679.5H691M693 679.5H695M699 679.5H704M707 679.5H709M711 679.5H714M715 679.5H723M724 679.5H727M730 679.5H735M736 679.5H740M744 679.5H752M755 679.5H763M764 679.5H772M775 679.5H779M781 679.5H785M789 679.5H799M803 679.5H807M808 679.5H809M811 679.5H815M818 679.5H819M821 679.5H822M824 679.5H829M832 679.5H833M834 679.5H837M838 679.5H840M844 679.5H854M857 679.5H867M868 679.5H871M873 679.5H881M885 679.5H886M889 679.5H892M896 679.5H897M898 679.5H902M905 679.5H907M909 679.5H912M916 679.5H921M923 679.5H925M927 679.5H935M938 679.5H948M950 679.5H958M960 679.5H968M970 679.5H980M982 679.5H992M994 679.5H1004M1006 679.5H1007M1010 679.5H1013M1015 679.5H1016M1017 679.5H1022M1024 679.5H1028M1032 679.5H1040M1043 679.5H1051M1052 679.5H1060M1062 679.5H1063M1065 679.5H1068M1071 679.5H1074M1076 679.5H1078M1082 679.5H1090M1092 679.5H1100M1104 679.5H1112M1114 679.5H1122M1123 679.5H1127M1130 679.5H1140M1143 679.5H1153M1154 679.5H1159M1161 679.5H1165M1168 679.5H1170M1173 679.5H1181M1183 679.5H1184M1185 679.5H1187M1190 679.5H1200M1202 679.5H1204M1208 679.5H1218M1219 679.5H1227M1229 679.5H1234M1237 679.5H1240M1243 679.5H1246M1248 679.5H1249M1251 679.5H1259M1260 679.5H1263M1265 679.5H1266M1267 679.5H1270M1274 679.5H1279M1283 679.5H1286M1289 679.5H1299M1300 679.5H1303M1304 679.5H1307M1309 679.5H1314M1317 679.5H1318M1319 679.5H1320M1324 679.5H1325M1328 679.5H1338M1342 679.5H1344M1346 679.5H1348M1352 679.5H1355M1357 679.5H1361M1363 679.5H1367M1368 679.5H1371M1372 679.5H1375M1377 679.5H1382M1386 679.5H1390M1392 679.5H1396M1398 679.5H1408M1411 679.5H1412M1413 679.5H1417M1420 679.5H1424M1427 679.5H1437M1441 679.5H1446" stroke="#0000ff" stroke-width="1" fill="none"/><path d="M117.0 576.4H1571.5V847.8" stroke="#383838" stroke-width="1.2" fill="none"/><path d="M117.0 576.4V847.8H1571.5" stroke="#000" stroke-width="1.6" fill="none"/><path d="M117.0 847.8v5M298.8 847.8v5M480.6 847.8v5M662.4 847.8v5M844.2 847.8v5M1026.1 847.8v5M1207.9 847.8v5M1389.7 847.8v5M1571.5 847.8v5M117.0 847.8h-4M117.0 712.1h-4M117.0 576.4h-4" stroke="#444" stroke-width="1" fill="none"/><g font-family="Liberation Serif" font-weight="bold" font-style="italic" font-size="11" fill="#000"><text x="117.5" y="867.0" text-anchor="middle" textLength="8.4" lengthAdjust="spacingAndGlyphs">0</text><text x="299.3" y="867.0" text-anchor="middle" textLength="40.8" lengthAdjust="spacingAndGlyphs">5,000</text><text x="481.1" y="867.0" text-anchor="middle" textLength="48.1" lengthAdjust="spacingAndGlyphs">10,000</text><text x="662.9" y="867.0" text-anchor="middle" textLength="47.1" lengthAdjust="spacingAndGlyphs">15,000</text><text x="844.8" y="867.0" text-anchor="middle" textLength="49.8" lengthAdjust="spacingAndGlyphs">20,000</text><text x="1026.6" y="867.0" text-anchor="middle" textLength="48.8" lengthAdjust="spacingAndGlyphs">25,000</text><text x="1208.4" y="867.0" text-anchor="middle" textLength="50.4" lengthAdjust="spacingAndGlyphs">30,000</text><text x="1390.2" y="867.0" text-anchor="middle" textLength="49.4" lengthAdjust="spacingAndGlyphs">35,000</text><text x="1572.0" y="867.0" text-anchor="middle" textLength="50.9" lengthAdjust="spacingAndGlyphs">40,000</text><text x="111.5" y="852.4" text-anchor="end" textLength="41.8" lengthAdjust="spacingAndGlyphs">0.000</text><text x="111.5" y="716.7" text-anchor="end" textLength="40.2" lengthAdjust="spacingAndGlyphs">0.200</text><text x="111.5" y="581.0" text-anchor="end" textLength="41.3" lengthAdjust="spacingAndGlyphs">0.400</text></g><text x="767.5" y="884.5" textLength="155" lengthAdjust="spacingAndGlyphs" font-family="Liberation Serif" font-weight="bold" font-style="italic" font-size="13.5">Elapsed Time (days)</text><text transform="translate(55.8,762) rotate(-90)" textLength="102.5" lengthAdjust="spacingAndGlyphs" font-family="Liberation Serif" font-weight="bold" font-style="italic" font-size="13">Soil Moisture</text><text x="703.5" y="526.5" textLength="210.5" lengthAdjust="spacingAndGlyphs" font-family="Liberation Sans" font-weight="bold" font-size="16" fill="#0000ff">Subcatch MySubCatchment</text><defs><filter id="sh" x="-5%" y="-50%" width="110%" height="200%"><feGaussianBlur stdDeviation="1"/></filter></defs><rect x="593.5" y="542.5" width="433" height="22" fill="#000" opacity="0.85" filter="url(#sh)"/><rect x="590.5" y="539.5" width="433" height="22" fill="#fff" stroke="#000" stroke-width="1"/><rect x="594.5" y="544.5" width="11" height="11" fill="#fff" stroke="#999"/><path d="M597 548.8l2.3 3 4.2-5.6" stroke="#000" stroke-width="1.5" fill="none"/><path d="M611 551.5H678" stroke="#5050ff" stroke-width="1"/><text x="687" y="555" textLength="102" lengthAdjust="spacingAndGlyphs" font-family="Liberation Serif" font-weight="bold" font-style="italic" font-size="13" fill="#0000ff">Soil Moisture</text><path d="M795 551.5h4" stroke="#6a6aff" stroke-width="1"/><rect x="806.5" y="544.5" width="11" height="11" fill="#fff" stroke="#999"/><path d="M809 548.8l2.3 3 4.2-5.6" stroke="#000" stroke-width="1.5" fill="none"/><path d="M823 549.5H890" stroke="#ff5050" stroke-width="1"/><text x="898" y="555" textLength="34" lengthAdjust="spacingAndGlyphs" font-family="Liberation Serif" font-weight="bold" font-style="italic" font-size="13" fill="#ff0000">IMD</text><path d="M940 551.5h4" stroke="#ff6a6a" stroke-width="1"/></svg>

<!-- right scrollbar strip -->
<div class="a" style="left:1590px;top:3px;width:10px;height:891px;background:#fff"></div>
<div class="a" style="left:1590px;top:3px;width:10px;height:18px;background:linear-gradient(90deg,#f4f4f4,#e8e8e8)"></div>
<div class="a" style="left:1591px;top:21px;width:1px;height:873px;background:#9a9a9a"></div>
<div class="a" style="left:1591px;top:21px;width:9px;height:1px;background:#c4c4c4"></div>
<div class="a" style="left:1592px;top:22px;width:8px;height:872px;background:linear-gradient(90deg,#f8f8f8,#e4e4e4)"></div>
<div class="a" style="left:1591px;top:875px;width:9px;height:1px;background:#a0a0a0"></div>
<div class="a" style="left:1591px;top:876px;width:9px;height:18px;background:linear-gradient(90deg,#e2e2e2,#eeeeee)"></div>
<svg class="a" style="left:1595px;top:9px" width="5" height="6"><path d="M0.5 5 L5 0.8 V5 Z" fill="#222"/></svg>
<svg class="a" style="left:1590px;top:230px" width="10" height="48"><defs><linearGradient id="rg" x1="0" y1="0" x2="0" y2="1"><stop offset="0" stop-color="#e4a39a"/><stop offset="0.5" stop-color="#d88478"/><stop offset="1" stop-color="#c87066"/></linearGradient></defs><circle cx="23.2" cy="23.5" r="22.5" fill="url(#rg)" stroke="#5a4040" stroke-width="1"/><rect x="7" y="16" width="5" height="16" rx="2" fill="#f0d4cf"/></svg>
<div class="a" style="left:1595px;top:444px;width:5px;height:8px;background:repeating-linear-gradient(#222 0 1px,#ddd 1px 3px)"></div>
</body></html>
